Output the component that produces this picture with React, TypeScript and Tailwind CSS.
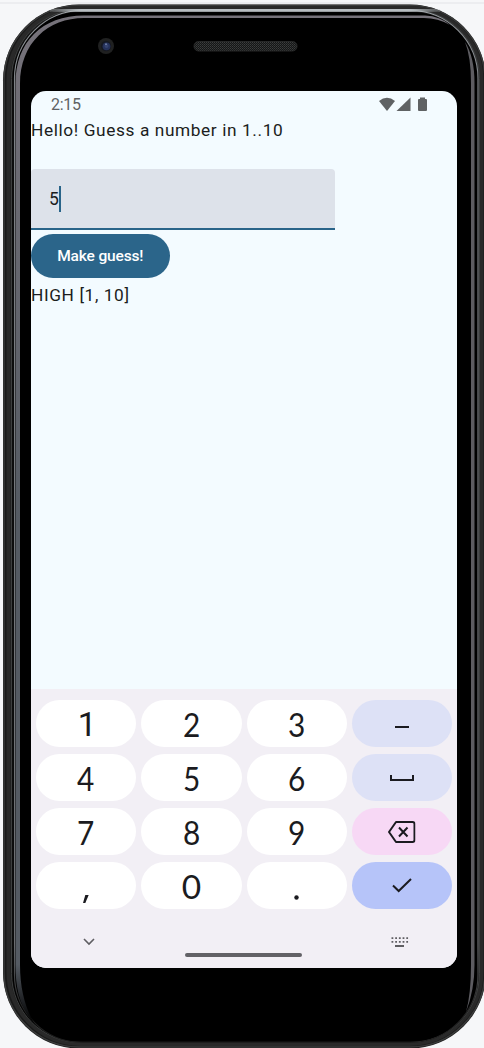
import React from 'react';

type KeyProps = { label: string; children?: React.ReactNode; className?: string };

function Key({ label, children, className = 'bg-white' }: KeyProps) {
  return (
    <button
      aria-label={label}
      className={`flex h-[47.3px] items-center justify-center rounded-full text-[#1b1b20] ${className}`}
    >
      {children}
    </button>
  );
}

function Digit({ value, className = "font-['Lato',sans-serif] text-[33.5px] translate-y-[0.7px] scale-x-[0.89]" }: { value: string; className?: string }) {
  return (
    <Key label={value}>
      <span className={`leading-none ${className}`}>{value}</span>
    </Key>
  );
}

function PhoneFrame() {
  return (
    <svg className="absolute inset-0 h-full w-full" viewBox="0 0 484 1048" fill="none" aria-hidden="true">
      <defs>
        <linearGradient id="rim" x1="0" y1="0" x2="0" y2="1048" gradientUnits="userSpaceOnUse">
          <stop offset="0" stopColor="#b7bdc1" />
          <stop offset="0.02" stopColor="#8d9195" />
          <stop offset="0.08" stopColor="#7e8286" />
          <stop offset="0.9" stopColor="#6b6d70" />
          <stop offset="0.96" stopColor="#242424" />
          <stop offset="1" stopColor="#1c1c1c" />
        </linearGradient>
        <linearGradient id="inner" x1="0" y1="0" x2="0" y2="1048" gradientUnits="userSpaceOnUse">
          <stop offset="0" stopColor="#77737b" />
          <stop offset="0.5" stopColor="#555b63" />
          <stop offset="0.92" stopColor="#555b63" />
          <stop offset="0.975" stopColor="#000000" />
        </linearGradient>
        <linearGradient id="shine" x1="40" y1="0" x2="450" y2="0" gradientUnits="userSpaceOnUse">
          <stop offset="0" stopColor="#b7bdc1" stopOpacity="0" />
          <stop offset="0.1" stopColor="#b7bdc1" />
          <stop offset="0.9" stopColor="#b7bdc1" />
          <stop offset="1" stopColor="#b7bdc1" stopOpacity="0" />
        </linearGradient>
        <pattern id="mesh" width="2" height="2" patternUnits="userSpaceOnUse">
          <rect width="2" height="2" fill="#151616" />
          <rect width="1" height="1" fill="#3c3e3e" />
          <rect x="1" y="1" width="1" height="1" fill="#2e3030" />
        </pattern>
      </defs>
      <path d="M0 3H484" stroke="#e9eaec" strokeWidth="1.5" />
      <rect x="3" y="4.500" width="483" height="1044" rx="76" fill="#1a1a1a" />
      <rect x="4" y="5.500" width="481" height="1041.500" rx="75" stroke="#3a3b3b" strokeWidth="1.500" />
      <rect x="8.500" y="8" width="473" height="1036" rx="72" stroke="#292929" strokeWidth="4" />
      <rect x="11.500" y="9.500" width="468" height="1033" rx="69" stroke="#3c3e3e" />
      <rect x="12.500" y="12" width="466" height="1029.500" rx="67" fill="#000" />
      <rect x="14.500" y="10.500" width="463.500" height="1032" rx="68" stroke="url(#rim)" strokeWidth="1.200" />
      <rect x="50" y="9" width="390" height="2.800" fill="url(#shine)" />
      <path d="M36 1026C20 1008 15.500 990 15.500 965V84C15.500 42 42 15.500 84 15.500H425Q440 16 450 25Q438 18 424 18H84C48 18 20 43 20 84V965C20 990 26 1011 36 1026Z" fill="url(#inner)" />
      <path d="M465 42Q474.500 57 474.500 83V965Q474.500 990 466 1012Q471 994 471 965V83Q471 57 465 42Z" fill="#5d5c61" />
      <circle cx="106" cy="46" r="8" fill="#202121" />
      <circle cx="106" cy="46" r="5.200" fill="#151820" />
      <circle cx="106.500" cy="46.300" r="3.900" fill="#25315a" />
      <circle cx="106.500" cy="46" r="2" fill="#35436f" />
      <circle cx="106" cy="44.200" r="0.900" fill="#7684ad" />
      <rect x="194" y="41.500" width="103" height="9.500" rx="4.500" fill="url(#mesh)" stroke="#262727" />
    </svg>
  );
}

function StatusBar() {
  return (
    <header className="flex h-[27px] items-center pl-[20px] pr-[30px] text-[#5f6264]">
      <time className="flex-1 text-[16px] leading-none tracking-[-0.3px]">2:15</time>
      <svg width="48" height="15" viewBox="0 0 48 15" fill="currentColor" aria-label="Wi-Fi, signal and battery">
        <path d="M0 4Q8 -2.500 16 4L8 14Z" />
        <path d="M31.500 0.500V14H17.500Z" />
        <path d="M41 0.500H46V2H47Q48 2 48 3V13Q48 14 47 14H40Q39 14 39 13V3Q39 2 40 2H41Z" />
      </svg>
    </header>
  );
}

function Keyboard() {
  return (
    <section className="flex h-[279px] flex-col bg-[#f2eff5]" aria-label="Keyboard">
      <div className="grid grid-cols-4 gap-x-[5px] gap-y-[6.7px] pl-[5px] pr-[5px] pt-[10.7px]">
        <Digit value="1" className="font-['Roboto',sans-serif] text-[33.5px] translate-x-[1px] translate-y-[1px]" />
        <Digit value="2" />
        <Digit value="3" />
        <Key label="Minus" className="bg-[#dde1f6]">
          <svg width="14" height="2" className="translate-y-[4px]"><path d="M0 1H14" stroke="currentColor" strokeWidth="2" /></svg>
        </Key>
        <Digit value="4" />
        <Digit value="5" />
        <Digit value="6" />
        <Key label="Space" className="bg-[#dde1f6]">
          <svg width="24" height="7" className="translate-y-[1px]" fill="none"><path d="M1 0V5H23V0" stroke="currentColor" strokeWidth="2" /></svg>
        </Key>
        <Digit value="7" />
        <Digit value="8" />
        <Digit value="9" />
        <Key label="Backspace" className="bg-[#f7d8f5]">
          <svg width="28" height="22" viewBox="0 0 28 22" fill="none" stroke="currentColor" strokeWidth="2" className="-translate-x-[0.5px] translate-y-[1px]">
            <path d="M8.500 1H25Q27 1 27 3V19Q27 21 25 21H8.500L1.500 11Z" strokeLinejoin="round" />
            <path d="M11.500 6.500L20 15.500M20 6.500L11.500 15.500" />
          </svg>
        </Key>
        <Key label="Comma">
          <svg width="6" height="8" className="translate-y-[14px]"><path d="M2.300 0H5.700L2.300 8H0Z" fill="currentColor" /></svg>
        </Key>
        <Digit value="0" className="font-['Lato',sans-serif] text-[33.5px] translate-y-[0.7px]" />
        <Key label="Period">
          <svg width="5" height="5" className="translate-y-[12px]"><circle cx="2.5" cy="2.5" r="2.2" fill="currentColor" /></svg>
        </Key>
        <Key label="Done" className="bg-[#b6c4f9]">
          <svg width="20" height="15" viewBox="0 0 20 15" fill="none"><path d="M1 7.500L6.700 13L19 1" stroke="currentColor" strokeWidth="2" /></svg>
        </Key>
      </div>
      <footer className="flex flex-1 items-start justify-between pl-[52px] pr-[48px] pt-[28px] text-[#5f5e62]">
        <svg width="12" height="8" className="mt-[1px]" fill="none" aria-label="Hide keyboard"><path d="M1 1L6 6L11 1" stroke="currentColor" strokeWidth="1.6" /></svg>
        <span className="mt-[16px] h-[4px] w-[117px] rounded-full bg-[#626166]" />
        <svg width="18" height="11" className="-translate-x-[0.5px]" fill="none" aria-label="Change keyboard">
          <path d="M1 1.200H18M1 4.800H18" stroke="currentColor" strokeWidth="1.800" strokeDasharray="1.800 1.900" />
          <path d="M4.500 9H13.500" stroke="currentColor" strokeWidth="2" />
        </svg>
      </footer>
    </section>
  );
}

export default function App() {
  return (
    <div className="relative h-[1048px] w-[484px] overflow-hidden bg-[#f6f7f9] font-['Roboto',sans-serif]">
      <PhoneFrame />
      <div className="relative pl-[31px] pt-[91px]">
        <main className="flex h-[877px] w-[426px] flex-col overflow-hidden rounded-[15px] bg-[#f3fbff] text-[#1b1d20]">
          <StatusBar />
          <p className="h-[51px] whitespace-nowrap text-[17.3px] leading-[24px] tracking-[0.6px]">Hello! Guess a number in 1..10</p>
          <div className="flex h-[61px] w-[304px] items-center rounded-t-[4px] border-b-2 border-[#296489] bg-[#dde2ea] pl-[18px] text-[17.5px]">
            <span className="translate-y-[1px]">5</span>
            <span className="h-[26px] w-[2px] bg-[#296489]" />
          </div>
          <button className="mt-[4px] h-[44px] w-[138.5px] rounded-full bg-[#2b658a] pt-[1px] text-[15.5px] font-medium tracking-[-0.15px] text-white">
            Make guess!
          </button>
          <p className="flex-1 whitespace-nowrap pt-[5px] text-[17.3px] leading-[24px] tracking-[0.6px]">HIGH [1, 10]</p>
          <Keyboard />
        </main>
      </div>
    </div>
  );
}
